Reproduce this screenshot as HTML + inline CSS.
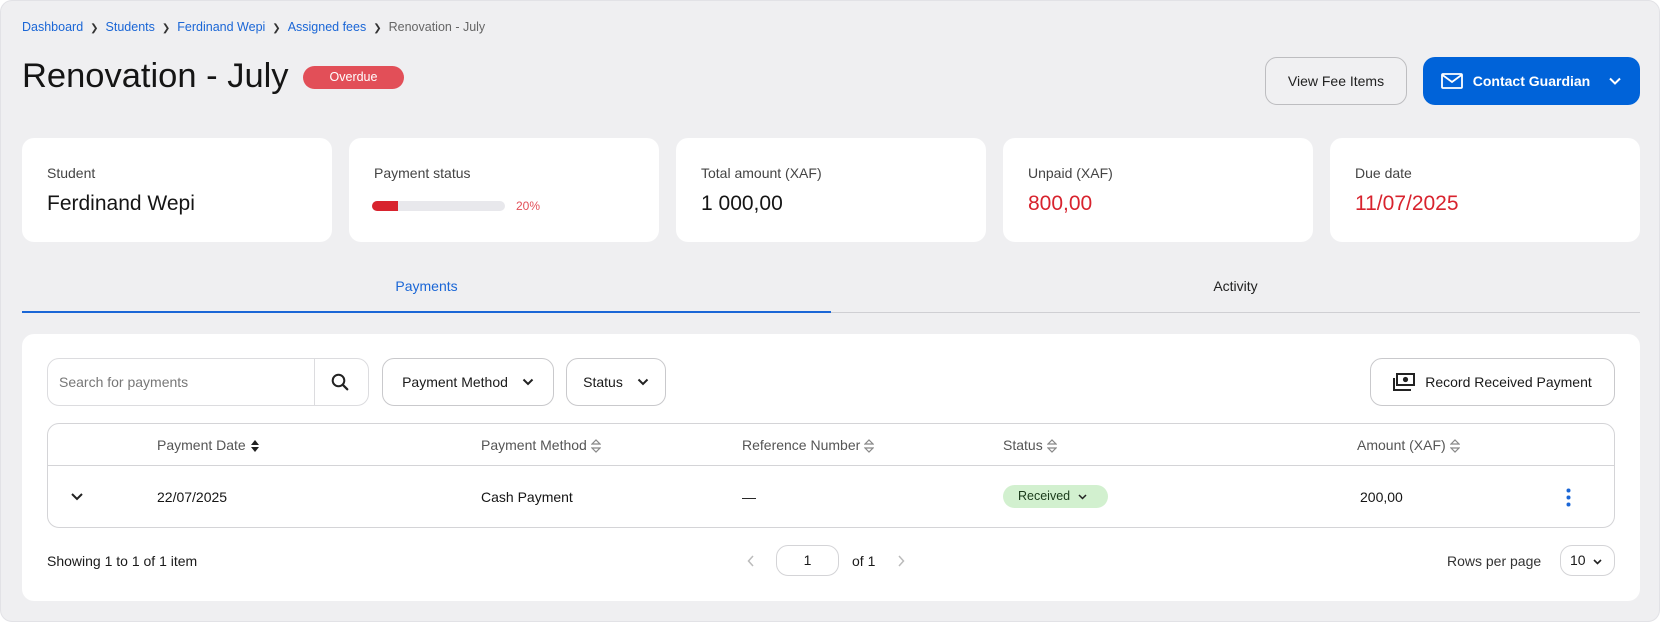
<!DOCTYPE html>
<html><head><meta charset="utf-8"><style>
*{box-sizing:border-box;margin:0;padding:0}
body{width:1664px;height:624px;background:#fff;font-family:"Liberation Sans",sans-serif;color:#1a1a1a;position:relative;overflow:hidden}
.a{position:absolute}
.panel{left:0;top:0;width:1660px;height:622px;background:#efeff1;border:1px solid #e2e2e6;border-radius:12px}
.bc{left:22px;top:20px;font-size:12.5px;color:#1a66d6;white-space:nowrap}
.bc span.s{color:#333;margin:0 7px;font-size:10px}
.bc span.g{color:#666}
.title{left:22px;top:57px;font-size:34.5px;color:#151515}
.badge{left:303px;top:66px;width:101px;height:23px;border-radius:12px;background:#e24f58;color:#fff;font-size:12.5px;text-align:center;line-height:23px}
.btn{border-radius:12px;font-size:14px;display:flex;align-items:center;justify-content:center}
.card{top:138px;width:310px;height:104px;background:#fff;border-radius:12px}
.card .l{position:absolute;left:25px;top:27px;font-size:14px;color:#444}
.card .v{position:absolute;left:25px;top:54px;font-size:21px;color:#151515}
.red{color:#d8232e!important}
.tab{top:278px;font-size:14px}
.inner{left:22px;top:334px;width:1618px;height:267px;background:#fff;border-radius:12px}
.box{border:1px solid #c9c9cc;border-radius:12px;background:#fff}
.th{top:437px;font-size:14px;color:#555}
.td{top:489px;font-size:14px;color:#151515}
.sort{display:inline-block;vertical-align:middle;margin-left:4px}
</style></head><body>
<div class="a panel"></div>
<div class="a bc">Dashboard<span class="s">❯</span>Students<span class="s">❯</span>Ferdinand Wepi<span class="s">❯</span>Assigned fees<span class="s">❯</span><span class="g">Renovation - July</span></div>
<div class="a title">Renovation - July</div>
<div class="a badge">Overdue</div>
<div class="a btn box" style="left:1265px;top:57px;width:142px;height:48px;background:#f0f0f2;border-color:#bdbdc0;color:#222">View Fee Items</div>
<div class="a btn" style="left:1423px;top:57px;width:217px;height:48px;background:#0063d9;color:#fff;gap:10px">
<svg width="22" height="16" viewBox="0 0 22 16"><rect x="1" y="1" width="20" height="14" rx="1" fill="none" stroke="#fff" stroke-width="1.8"/><path d="M1.5 2l9.5 7 9.5-7" fill="none" stroke="#fff" stroke-width="1.8"/></svg>
<span style="font-weight:bold">Contact Guardian</span>
<svg width="14" height="10" viewBox="0 0 14 10" style="margin-left:8px"><path d="M2 2.5l5 5 5-5" fill="none" stroke="#fff" stroke-width="2"/></svg></div>

<div class="a card" style="left:22px"><div class="l">Student</div><div class="v">Ferdinand Wepi</div></div>
<div class="a card" style="left:349px"><div class="l">Payment status</div>
<div style="position:absolute;left:23px;top:63px;width:133px;height:10px;border-radius:5px;background:#e8e8ec"><div style="width:26px;height:10px;border-radius:5px 0 0 5px;background:#d8232e"></div></div>
<div style="position:absolute;left:167px;top:61px;font-size:12px;color:#e24f58">20%</div></div>
<div class="a card" style="left:676px"><div class="l">Total amount (XAF)</div><div class="v">1 000,00</div></div>
<div class="a card" style="left:1003px"><div class="l">Unpaid (XAF)</div><div class="v red">800,00</div></div>
<div class="a card" style="left:1330px"><div class="l">Due date</div><div class="v red">11/07/2025</div></div>

<div class="a tab" style="left:22px;width:809px;text-align:center;color:#1a66d6">Payments</div>
<div class="a tab" style="left:831px;width:809px;text-align:center;color:#222">Activity</div>
<div class="a" style="left:22px;top:312px;width:1618px;height:1px;background:#cfcfd3"></div>
<div class="a" style="left:22px;top:311px;width:809px;height:2px;background:#1a66d6"></div>

<div class="a inner"></div>
<div class="a box" style="left:47px;top:358px;width:322px;height:48px;border-color:#dcdcdf"></div>
<div class="a" style="left:314px;top:359px;width:1px;height:46px;background:#dcdcdf"></div>
<div class="a" style="left:59px;top:374px;font-size:14px;color:#777">Search for payments</div>
<svg class="a" style="left:331px;top:373px" width="18" height="18" viewBox="0 0 18 18"><circle cx="7.5" cy="7.5" r="5.8" fill="none" stroke="#222" stroke-width="2"/><path d="M11.8 11.8l4.5 4.5" stroke="#222" stroke-width="2.2" stroke-linecap="round"/></svg>
<div class="a box btn" style="left:382px;top:358px;width:172px;height:48px;gap:14px;color:#1a1a1a">Payment Method<svg width="12" height="8" viewBox="0 0 12 8"><path d="M1.5 1.5l4.5 4.5 4.5-4.5" fill="none" stroke="#222" stroke-width="2"/></svg></div>
<div class="a box btn" style="left:566px;top:358px;width:100px;height:48px;gap:14px;color:#1a1a1a">Status<svg width="12" height="8" viewBox="0 0 12 8"><path d="M1.5 1.5l4.5 4.5 4.5-4.5" fill="none" stroke="#222" stroke-width="2"/></svg></div>
<div class="a box btn" style="left:1370px;top:358px;width:245px;height:48px;gap:10px;color:#1a1a1a">
<svg width="22" height="18" viewBox="0 0 22 18"><rect x="4" y="1" width="17" height="11" fill="none" stroke="#222" stroke-width="2"/><circle cx="12.5" cy="6.5" r="2.6" fill="#222"/><path d="M1 5v12h17" fill="none" stroke="#222" stroke-width="2"/></svg>Record Received Payment</div>

<div class="a box" style="left:47px;top:423px;width:1568px;height:105px;border-color:#d4d4d7"></div>
<div class="a" style="left:48px;top:465px;width:1566px;height:1px;background:#d4d4d7"></div>
<svg width="0" height="0" style="position:absolute"><defs>
<g id="so"><path d="M1 5l4-4 4 4z" fill="none" stroke="#888" stroke-width="1.2"/><path d="M1 9l4 4 4-4z" fill="none" stroke="#888" stroke-width="1.2"/></g></defs></svg>
<div class="a th" style="left:157px">Payment Date<svg class="sort" width="10" height="14" viewBox="0 0 10 14"><path d="M1 6l4-5 4 5zM1 8l4 5 4-5z" fill="#222"/></svg></div>
<div class="a th" style="left:481px">Payment Method<svg class="sort" width="10" height="14"><use href="#so"/></svg></div>
<div class="a th" style="left:742px">Reference Number<svg class="sort" width="10" height="14"><use href="#so"/></svg></div>
<div class="a th" style="left:1003px">Status<svg class="sort" width="10" height="14"><use href="#so"/></svg></div>
<div class="a th" style="left:1357px">Amount (XAF)<svg class="sort" width="10" height="14"><use href="#so"/></svg></div>
<svg class="a" style="left:70px;top:492px" width="14" height="9" viewBox="0 0 14 9"><path d="M2 2l5 5 5-5" fill="none" stroke="#222" stroke-width="2"/></svg>
<div class="a td" style="left:157px">22/07/2025</div>
<div class="a td" style="left:481px">Cash Payment</div>
<div class="a td" style="left:742px">—</div>
<div class="a" style="left:1003px;top:485px;width:105px;height:23px;border-radius:12px;background:#d2f0cf;font-size:12.5px;line-height:23px;padding-left:15px;color:#1a3a1a">Received<svg style="margin-left:8px" width="9" height="6" viewBox="0 0 9 6"><path d="M1 1l3.5 3.5L8 1" fill="none" stroke="#222" stroke-width="1.5"/></svg></div>
<div class="a td" style="left:1360px">200,00</div>
<svg class="a" style="left:1566px;top:488px" width="5" height="19" viewBox="0 0 5 19"><circle cx="2.5" cy="2.5" r="2" fill="#1a66d6"/><circle cx="2.5" cy="9.5" r="2" fill="#1a66d6"/><circle cx="2.5" cy="16.5" r="2" fill="#1a66d6"/></svg>

<div class="a" style="left:47px;top:553px;font-size:14px">Showing 1 to 1 of 1 item</div>
<svg class="a" style="left:747px;top:555px" width="8" height="12" viewBox="0 0 8 12"><path d="M6 1L1.5 6 6 11" fill="none" stroke="#bbb" stroke-width="1.5"/></svg>
<div class="a box" style="left:776px;top:545px;width:63px;height:31px;border-color:#d4d4d7;text-align:center;line-height:29px;font-size:14px">1</div>
<div class="a" style="left:852px;top:553px;font-size:14px">of 1</div>
<svg class="a" style="left:897px;top:555px" width="8" height="12" viewBox="0 0 8 12"><path d="M2 1l4.5 5L2 11" fill="none" stroke="#bbb" stroke-width="1.5"/></svg>
<div class="a" style="left:1447px;top:553px;font-size:14px;color:#333">Rows per page</div>
<div class="a box" style="left:1560px;top:545px;width:55px;height:31px;border-color:#d4d4d7;font-size:14px;line-height:29px;padding-left:9px">10<svg style="margin-left:7px" width="9" height="6" viewBox="0 0 9 6"><path d="M1 1l3.5 3.5L8 1" fill="none" stroke="#222" stroke-width="1.6"/></svg></div>
</body></html>
